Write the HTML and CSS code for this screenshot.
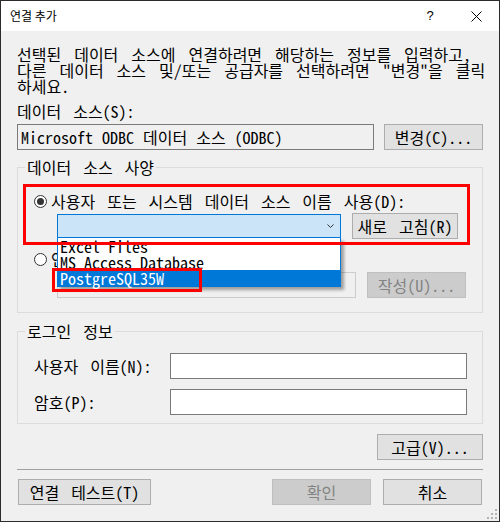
FILE: index.html
```html
<!DOCTYPE html>
<html>
<head>
    <title>연결 추가</title>
    <link rel="stylesheet" href="styles.css">
</head>
<body>
    <div class="window">
        <div class="titlebar">
            <span class="title">연결 추가</span>
            <span class="help">?</span>
            <span class="close">
                <svg width="11" height="11" viewBox="0 0 11 11"><path d="M0.5 0.5 L10.5 10.5 M10.5 0.5 L0.5 10.5" stroke="#000" stroke-width="1" fill="none"/></svg>
            </span>
        </div>

        <div class="content">
            <p class="intro">선택된 데이터 소스에 연결하려면 해당하는 정보를 입력하고,<br>다른 데이터 소스 및/또는 공급자를 선택하려면 "변경"을 클릭<br>하세요.</p>

            <div class="label">데이터 소스(S):</div>
            <div class="row source-row">
                <div class="textbox readonly source">Microsoft ODBC 데이터 소스 (ODBC)</div>
                <button class="btn change">변경(C)...</button>
            </div>

            <fieldset class="group spec">
                <legend>데이터 소스 사양</legend>
                <div class="group-body">
                    <div class="radio-row"><span class="radio checked"></span>사용자 또는 시스템 데이터 소스 이름 사용(D):</div>
                    <div class="row indent combo-row">
                        <div class="combo">
                            <svg width="7" height="4" viewBox="0 0 7 4"><path d="M0.5 0.5 L3.5 3.5 L6.5 0.5" stroke="#333" stroke-width="1" fill="none"/></svg>
                            <ul class="dropdown">
                                <li>Excel Files</li>
                                <li>MS Access Database</li>
                                <li class="selected">PostgreSQL35W</li>
                            </ul>
                        </div>
                        <button class="btn refresh">새로 고침(R)</button>
                    </div>
                    <div class="radio-row second"><span class="radio"></span>연결 문자열 사용(B):</div>
                    <div class="row indent conn-row">
                        <div class="textbox disabled conn"></div>
                        <button class="btn build" disabled>작성(U)...</button>
                    </div>
                </div>
            </fieldset>

            <fieldset class="group login">
                <legend>로그인 정보</legend>
                <div class="group-body">
                    <div class="field">
                        <span class="field-label">사용자 이름(N):</span>
                        <div class="textbox"></div>
                    </div>
                    <div class="field">
                        <span class="field-label">암호(P):</span>
                        <div class="textbox"></div>
                    </div>
                </div>
            </fieldset>

            <div class="row advanced-row">
                <button class="btn advanced">고급(V)...</button>
            </div>

            <div class="separator"></div>

            <div class="row footer">
                <button class="btn test">연결 테스트(T)</button>
                <button class="btn ok" disabled>확인</button>
                <button class="btn cancel">취소</button>
            </div>
        </div>

        <!-- highlight marks drawn over the dialog -->
        <div class="mark mark-dsn"></div>
        <div class="mark mark-item"></div>

        <svg class="grip" width="10" height="10" viewBox="0 0 10 10">
            <rect x="8" y="0" width="2" height="2" fill="#b4b4b4"/>
            <rect x="4" y="4" width="2" height="2" fill="#b4b4b4"/>
            <rect x="8" y="4" width="2" height="2" fill="#b4b4b4"/>
            <rect x="0" y="8" width="2" height="2" fill="#b4b4b4"/>
            <rect x="4" y="8" width="2" height="2" fill="#b4b4b4"/>
            <rect x="8" y="8" width="2" height="2" fill="#b4b4b4"/>
        </svg>
    </div>
</body>
</html>
```

FILE: styles.css
```css
body {
    margin: 0;
    background: #fff;
}
.window {
    position: relative;
    width: 500px;
    height: 522px;
    box-sizing: border-box;
    border: 1px solid #2b2b2b;
    background: #f0f0f0;
    font-family: "Noto Sans Mono CJK KR", "Noto Sans CJK KR", monospace;
    font-size: 16px;
    line-height: 16px;
    word-spacing: 4px;
    color: #000;
}
.titlebar {
    height: 30px;
    background: #fff;
    display: flex;
    align-items: center;
    padding-left: 9px;
    font-family: "Noto Sans CJK KR", sans-serif;
    font-size: 12px;
    word-spacing: 0;
}
.title {
    flex: 1;
}
.help,
.close {
    width: 46px;
    height: 30px;
    display: flex;
    align-items: center;
    justify-content: center;
}
.help {
    font-family: "Liberation Sans", sans-serif;
    font-size: 13px;
}
.content {
    padding: 0 16px;
}
.intro {
    margin: 15px 0 0;
    word-spacing: 5px;
    white-space: nowrap;
}
.label {
    margin-top: 9px;
}
.row {
    display: flex;
    align-items: center;
}
.textbox {
    box-sizing: border-box;
    height: 26px;
    border: 1px solid #7a7a7a;
    background: #fff;
}
.textbox.readonly {
    background: #f0f0f0;
    padding: 4px 3px;
}
.textbox.disabled {
    border-color: #cccccc;
    background: #f0f0f0;
}
.btn {
    box-sizing: border-box;
    height: 26px;
    padding: 0;
    border: 1px solid #adadad;
    background: #e1e1e1;
    color: #000;
    font: inherit;
    word-spacing: inherit;
}
.btn:disabled {
    border-color: #bfbfbf;
    background: #cccccc;
    color: #838383;
}
.source-row {
    margin-top: 5px;
}
.source {
    width: 357px;
    word-spacing: 1px;
}
.change {
    width: 99px;
    margin-left: 10px;
}

/* group boxes */
.group {
    margin: 9px 0 0;
    padding: 0;
    border: 1px solid #dcdcdc;
    min-width: 0;
}
.group legend {
    margin-left: 7px;
    padding: 0 2px;
    line-height: 16px;
}
.spec .group-body {
    padding: 18px 0 14px 16px;
}
.radio-row {
    display: flex;
    align-items: center;
    height: 16px;
}
.radio {
    box-sizing: border-box;
    width: 13px;
    height: 13px;
    margin-right: 4px;
    border: 1px solid #333;
    border-radius: 50%;
    background: #fff;
    position: relative;
}
.radio.checked::after {
    content: "";
    position: absolute;
    left: 2px;
    top: 2px;
    width: 7px;
    height: 7px;
    border-radius: 50%;
    background: #333;
}
.indent {
    padding-left: 23px;
}
.combo-row {
    margin-top: 4px;
}
.combo {
    position: relative;
    box-sizing: border-box;
    width: 284px;
    height: 24px;
    border: 1px solid #0078d7;
    background: #cce4f7;
    display: flex;
    align-items: center;
    justify-content: flex-end;
    padding-right: 6px;
}
.dropdown {
    position: absolute;
    top: 23px;
    left: -1px;
    width: 284px;
    box-sizing: border-box;
    margin: 0;
    padding: 0;
    list-style: none;
    background: #fff;
    border: 1px solid #0078d7;
    border-top: none;
    box-shadow: 3px 3px 3px rgba(0, 0, 0, 0.35);
    word-spacing: 0;
    z-index: 2;
}
.dropdown li {
    height: 16px;
    padding-left: 2px;
}
.dropdown li.selected {
    background: #0078d7;
    color: #fff;
}
.refresh {
    width: 106px;
    margin-left: 11px;
}
.radio-row.second {
    margin-top: 12px;
}
.conn-row {
    margin-top: 5px;
}
.conn {
    width: 299px;
}
.build {
    width: 99px;
    margin-left: 11px;
}

.login {
    margin-top: 10px;
}
.login .group-body {
    padding: 14px 15px 8px 16px;
}
.field {
    display: flex;
    align-items: center;
}
.field + .field {
    margin-top: 10px;
}
.field-label {
    width: 136px;
}
.field .textbox {
    flex: 1;
}

.advanced-row {
    margin-top: 10px;
    justify-content: flex-end;
}
.advanced {
    width: 106px;
}
.separator {
    margin-top: 9px;
    height: 1px;
    background: #a0a0a0;
}
.footer {
    margin-top: 9px;
}
.test {
    width: 133px;
    margin-left: 1px;
}
.ok {
    width: 99px;
    margin-left: auto;
}
.cancel {
    width: 99px;
    margin-left: 12px;
    margin-right: 1px;
}

.mark {
    position: absolute;
    box-sizing: border-box;
    border: 3px solid #ff0000;
    z-index: 3;
}
.mark-dsn {
    left: 22px;
    top: 183px;
    width: 447px;
    height: 61px;
}
.mark-item {
    left: 51px;
    top: 267px;
    width: 150px;
    height: 24px;
}
.grip {
    position: absolute;
    right: 2px;
    bottom: 2px;
}
```
